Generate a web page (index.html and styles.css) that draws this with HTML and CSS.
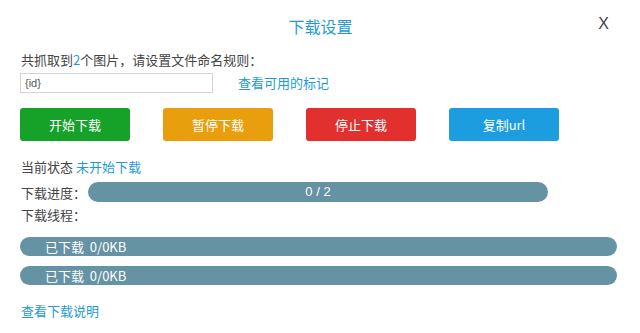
FILE: index.html
```html
<!DOCTYPE html>
<html lang="zh-CN">
<head>
<meta charset="utf-8">
<title>下载设置</title>
<link rel="stylesheet" href="styles.css">
</head>
<body>
<div class="dialog">
  <div class="header">
    <span></span>
    <h1 class="title">下载设置</h1>
    <span class="close">X</span>
  </div>
  <p class="line">共抓取到<span class="blue">2</span>个图片，请设置文件命名规则：</p>
  <div class="name-row">
    <input class="name-input" type="text" value="{id}">
    <a class="link">查看可用的标记</a>
  </div>
  <div class="buttons">
    <button class="btn green">开始下载</button>
    <button class="btn orange">暂停下载</button>
    <button class="btn red">停止下载</button>
    <button class="btn blue-bg">复制url</button>
  </div>
  <p class="line status">当前状态 <span class="blue">未开始下载</span></p>
  <div class="progress-row">
    <span class="label">下载进度：</span>
    <div class="progress">0 / 2</div>
  </div>
  <p class="line threads-label">下载线程：</p>
  <div class="threads">
    <div class="thread">已下载&nbsp; 0/0KB</div>
    <div class="thread">已下载&nbsp; 0/0KB</div>
  </div>
  <a class="link help">查看下载说明</a>
</div>
</body>
</html>
```
FILE: styles.css
```css
* { box-sizing: border-box; }
html, body { margin: 0; padding: 0; background: #fff; }
body {
  font-family: "Noto Sans CJK SC", "Liberation Sans", sans-serif;
  font-size: 13px;
  color: #444;
}
.dialog { padding: 0 20px 0 21px; width: 640px; }
.header {
  display: grid;
  grid-template-columns: 1fr auto 1fr;
  align-items: start;
  padding-top: 15px;
  height: 51px;
}
.title {
  margin: 0;
  font-size: 16px;
  font-weight: normal;
  line-height: 22px;
  color: #1f9bd4;
}
.close {
  justify-self: end;
  margin-right: 11px;
  margin-top: -2px;
  font-family: "Liberation Sans", sans-serif;
  font-size: 16px;
  line-height: 22px;
  color: #444;
}
.line { margin: 0; line-height: 18px; }
.blue { color: #1f9bd4; }
.name-row {
  display: flex;
  align-items: center;
  margin-top: 4px;
  gap: 25px;
}
.name-input {
  width: 193px;
  height: 20px;
  margin: 0 0 0 -1px;
  border: 1px solid #d4d4d4;
  padding: 0 4px;
  font-family: "Liberation Sans", sans-serif;
  font-size: 11px;
  color: #555;
  outline: none;
}
.link { color: #1f9bd4; text-decoration: none; line-height: 18px; }
.buttons {
  display: flex;
  gap: 33px;
  margin-top: 15px;
  margin-left: -1px;
}
.btn {
  width: 110px;
  height: 33px;
  border: none;
  border-radius: 3px;
  color: #fff;
  font-family: "Noto Sans CJK SC", "Liberation Sans", sans-serif;
  font-size: 13px;
  padding: 0;
}
.green { background: #16a129; }
.orange { background: #e99e0d; }
.red { background: #e2302f; }
.blue-bg { background: #1b9ddf; }
.status { margin-top: 17px; }
.progress-row {
  display: flex;
  align-items: center;
  margin-top: 6px;
  height: 20px;
}
.label { width: 67px; }
.progress {
  width: 460px;
  height: 20px;
  border-radius: 10px;
  background: #6693a4;
  color: #fff;
  text-align: center;
  line-height: 20px;
  font-family: "Liberation Sans", "Noto Sans CJK SC", sans-serif;
  font-size: 13px;
}
.threads-label { margin-top: 4px; }
.threads {
  display: flex;
  flex-direction: column;
  gap: 10px;
  margin-top: 13px;
  margin-left: -1px;
}
.thread {
  width: 597px;
  height: 19px;
  border-radius: 10px;
  background: #6693a4;
  color: #fff;
  line-height: 19px;
  padding-left: 25px;
}
.help { display: block; margin-top: 17px; }
```
